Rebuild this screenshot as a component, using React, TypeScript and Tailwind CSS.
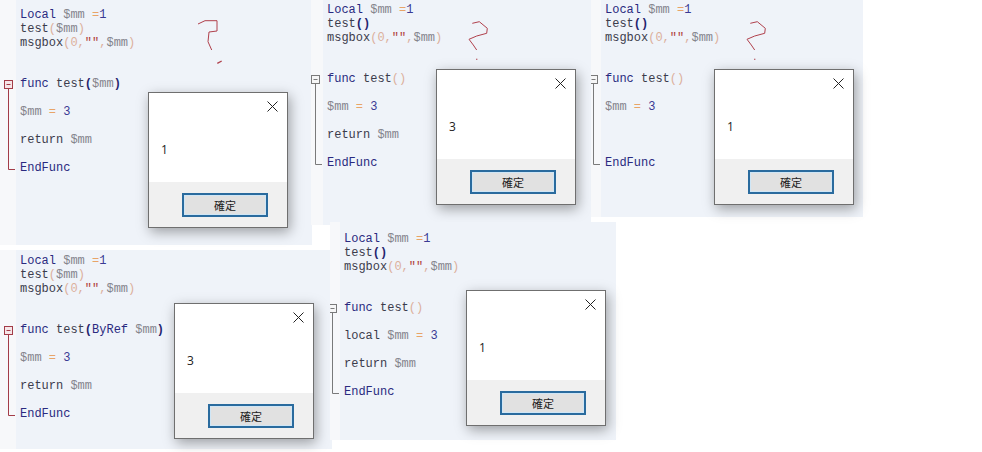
import type { ReactNode } from "react";

const Kw = ({ children }: { children: ReactNode }) => <span className="text-[#2a2a80]">{children}</span>;
const Fn = ({ children }: { children: ReactNode }) => <span className="text-[#3c3c4c]">{children}</span>;
const Var = ({ children }: { children: ReactNode }) => <span className="text-[#84848c]">{children}</span>;
const Par = ({ children }: { children: ReactNode }) => <span className="text-[#dcb09c]">{children}</span>;
const Bold = ({ children }: { children: ReactNode }) => <span className="font-bold text-[#24246e]">{children}</span>;
const Op = ({ children }: { children: ReactNode }) => <span className="text-[#e8a468]">{children}</span>;
const Num = ({ children }: { children: ReactNode }) => <span className="text-[#3a3a94]">{children}</span>;
const Str = ({ children }: { children: ReactNode }) => <span className="text-[#b0403c]">{children}</span>;

const LocalLine = () => (
  <div>
    <Kw>Local</Kw> <Var>$mm</Var> <Op>=</Op>
    <Num>1</Num>
  </div>
);

const MsgboxLine = () => (
  <div>
    <Fn>msgbox</Fn>
    <Par>(0,</Par>
    <Str>""</Str>
    <Par>,</Par>
    <Var>$mm</Var>
    <Par>)</Par>
  </div>
);

const FoldMarker = ({ red }: { red?: boolean }) => {
  const c = red ? "#a33c48" : "#7a7a7a";
  return (
    <svg width="16" height="92" viewBox="0 0 16 92" className="shrink-0">
      <rect x="4.5" y="0.5" width="8" height="8" fill={red ? "#f6e6e8" : "#f6f6f6"} stroke={c} />
      <path d="M6.5 4.5h4" stroke={c} />
      <path d="M8.5 9v80.5H15" fill="none" stroke={c} />
    </svg>
  );
};

const Dialog = ({ value, className }: { value: string; className: string }) => (
  <div
    className={`absolute flex h-[136px] w-[140px] flex-col border border-[#6f6f6f] bg-white font-['Open_Sans','Liberation_Sans',sans-serif] text-xs text-[#222] shadow-[2px_4px_12px_rgba(0,0,0,0.35)] ${className}`}
  >
    <div className="relative flex h-[89px] items-end pb-6 pl-3">
      <span>{value}</span>
      <svg width="11" height="11" viewBox="0 0 11 11" className="absolute right-[9px] top-[8px]">
        <path d="M0.5 0.5l10 10M10.5 0.5l-10 10" stroke="#222" />
      </svg>
    </div>
    <div className="flex flex-1 items-start justify-end bg-[#f0f0f0] pr-[19px] pt-[11px]">
      <div className="flex h-[24px] w-[86px] items-center justify-center border-2 border-[#2a6b9e] bg-[#e1e1e1] font-['Noto_Sans_CJK_TC',sans-serif] text-[11px] shadow-[inset_0_0_0_1px_#cfe6f6]">
        確定
      </div>
    </div>
  </div>
);

const Question = ({ className, points, dot }: { className: string; points: string; dot: string }) => (
  <svg width="40" height="56" viewBox="0 0 40 56" className={`absolute ${className}`}>
    <path d={points} fill="none" stroke="#b0404c" strokeWidth="1" />
    <path d={dot} fill="none" stroke="#b0404c" strokeWidth="1.4" />
  </svg>
);

type PanelProps = {
  className: string;
  gutter: string;
  codeTop: string;
  foldTop: string;
  red?: boolean;
  head: ReactNode;
  body: ReactNode[];
  children: ReactNode;
};

const Panel = ({ className, gutter, codeTop, foldTop, red, head, body, children }: PanelProps) => (
  <div className={`absolute flex bg-[#eff3f9] font-['Liberation_Mono',monospace] text-xs ${className}`}>
    <div className={`flex shrink-0 justify-end overflow-hidden bg-[#f7f8fa] ${gutter} ${foldTop}`}>
      <div className="shrink-0">
        <FoldMarker red={red} />
      </div>
    </div>
    <div className={`pl-1 ${codeTop}`}>
      <div className="whitespace-pre leading-[14px]">{head}</div>
      <div className="mt-5 whitespace-pre">
        {body.map((line, i) => (
          <div key={i} className="h-7 leading-7">
            {line}
          </div>
        ))}
      </div>
    </div>
    {children}
  </div>
);

const qMark2 = "M6.300 12.300 L13.300 10.700 L21.300 17.300 L20.700 22.300 L10.700 25 L3 28.300 L7.300 34 L10.700 39";
const qDot2 = "M10.700 47.800v1";

export default function App() {
  return (
    <div className="relative h-[452px] w-[982px] overflow-hidden bg-white">
      <Panel
        className="left-0 top-0 h-[245px] w-[312px]"
        gutter="w-4"
        codeTop="pt-2"
        foldTop="pt-20"
        red
        head={
          <>
            <LocalLine />
            <div>
              <Fn>test</Fn>
              <Par>(</Par>
              <Var>$mm</Var>
              <Par>)</Par>
            </div>
            <MsgboxLine />
          </>
        }
        body={[
          <>
            <Kw>func</Kw> <Fn>test</Fn>
            <Bold>(</Bold>
            <Var>$mm</Var>
            <Bold>)</Bold>
          </>,
          <>
            <Var>$mm</Var> <Op>=</Op> <Num>3</Num>
          </>,
          <>
            <Fn>return</Fn> <Var>$mm</Var>
          </>,
          <Kw>EndFunc</Kw>,
        ]}
      >
        <Question
          className="left-[194px] top-[15px]"
          points="M4 9 L11 5.700 L23 5.700 L23 16 L15 17 L14 26.700 L17.700 35"
          dot="M23.300 48.300L27.700 46"
        />
        <Dialog value="1" className="left-[148px] top-[92px]" />
      </Panel>

      <Panel
        className="left-[311px] top-0 h-[225px] w-[280px]"
        gutter="w-3"
        codeTop="pt-[3px]"
        foldTop="pt-[75px]"
        head={
          <>
            <LocalLine />
            <div>
              <Fn>test</Fn>
              <Bold>()</Bold>
            </div>
            <MsgboxLine />
          </>
        }
        body={[
          <>
            <Kw>func</Kw> <Fn>test</Fn>
            <Par>()</Par>
          </>,
          <>
            <Var>$mm</Var> <Op>=</Op> <Num>3</Num>
          </>,
          <>
            <Fn>return</Fn> <Var>$mm</Var>
          </>,
          <Kw>EndFunc</Kw>,
        ]}
      >
        <Question className="left-[155px] top-[11px]" points={qMark2} dot={qDot2} />
        <Dialog value="3" className="left-[125px] top-[69px]" />
      </Panel>

      <Panel
        className="left-[591px] top-0 h-[217px] w-[272px]"
        gutter="w-2.5"
        codeTop="pt-[3px]"
        foldTop="pt-[75px]"
        head={
          <>
            <LocalLine />
            <div>
              <Fn>test</Fn>
              <Bold>()</Bold>
            </div>
            <MsgboxLine />
          </>
        }
        body={[
          <>
            <Kw>func</Kw> <Fn>test</Fn>
            <Par>()</Par>
          </>,
          <>
            <Var>$mm</Var> <Op>=</Op> <Num>3</Num>
          </>,
          <span />,
          <Kw>EndFunc</Kw>,
        ]}
      >
        <Question className="left-[153px] top-[11px]" points={qMark2} dot={qDot2} />
        <Dialog value="1" className="left-[123px] top-[69px]" />
      </Panel>

      <Panel
        className="left-0 top-[250px] h-[199px] w-[332px]"
        gutter="w-4"
        codeTop="pt-1"
        foldTop="pt-[76px]"
        red
        head={
          <>
            <LocalLine />
            <div>
              <Fn>test</Fn>
              <Par>(</Par>
              <Var>$mm</Var>
              <Par>)</Par>
            </div>
            <MsgboxLine />
          </>
        }
        body={[
          <>
            <Kw>func</Kw> <Fn>test</Fn>
            <Bold>(</Bold>
            <Kw>ByRef</Kw> <Var>$mm</Var>
            <Bold>)</Bold>
          </>,
          <>
            <Var>$mm</Var> <Op>=</Op> <Num>3</Num>
          </>,
          <>
            <Fn>return</Fn> <Var>$mm</Var>
          </>,
          <Kw>EndFunc</Kw>,
        ]}
      >
        <Dialog value="3" className="left-[174px] top-[53px]" />
      </Panel>

      <Panel
        className="left-[330px] top-[222px] h-[218px] w-[286px]"
        gutter="w-2.5"
        codeTop="pt-2.5"
        foldTop="pt-[82px]"
        head={
          <>
            <LocalLine />
            <div>
              <Fn>test</Fn>
              <Bold>()</Bold>
            </div>
            <MsgboxLine />
          </>
        }
        body={[
          <>
            <Kw>func</Kw> <Fn>test</Fn>
            <Par>()</Par>
          </>,
          <>
            <Fn>local</Fn> <Var>$mm</Var> <Op>=</Op> <Num>3</Num>
          </>,
          <>
            <Fn>return</Fn> <Var>$mm</Var>
          </>,
          <Kw>EndFunc</Kw>,
        ]}
      >
        <Dialog value="1" className="left-[136px] top-[68px]" />
      </Panel>
    </div>
  );
}
